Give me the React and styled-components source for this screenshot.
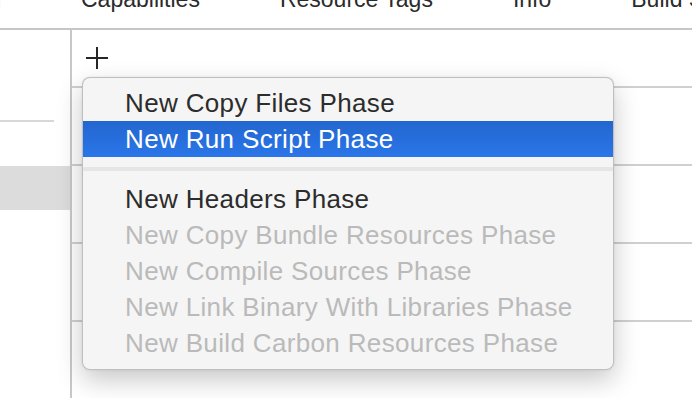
import React from "react";
import styled, { createGlobalStyle } from "styled-components";

const Global = createGlobalStyle`
  html, body { margin: 0; padding: 0; background: #ffffff; overflow: hidden; }
  * { box-sizing: border-box; }
`;

const Page = styled.div`
  width: 692px;
  height: 398px;
  display: flex;
  flex-direction: column;
  font-family: "Liberation Sans", Arial, sans-serif;
  background: #fff;
  overflow: hidden;
`;

const TabBar = styled.div`
  height: 30px;
  flex: none;
  display: flex;
  align-items: flex-start;
  gap: 80px;
  margin-left: -99px;
  border-bottom: 2px solid #c6c6c6;
  overflow: hidden;
`;

const Tab = styled.div`
  flex: none;
  width: ${(p) => (p.$w ? `${p.$w}px` : "auto")};
  text-align: ${(p) => (p.$w ? "right" : "left")};
  font-size: 23px;
  line-height: 23px;
  margin-top: -12px;
  color: #2b2b2b;
  white-space: nowrap;
`;

const Body = styled.div`
  flex: 1;
  display: flex;
`;

const Sidebar = styled.div`
  width: 72px;
  flex: none;
  border-right: 2px solid #c8c8c8;
  display: flex;
  flex-direction: column;
  padding-top: 90px;
`;

const SideDivider = styled.div`
  width: 54px;
  height: 2px;
  background: #d8d8d8;
  margin-bottom: 44px;
`;

const SideSelected = styled.div`
  height: 44px;
  background: #dcdcdc;
`;

const Main = styled.div`
  flex: 1;
  position: relative;
  display: flex;
  flex-direction: column;
`;

const Toolbar = styled.div`
  height: 58px;
  flex: none;
  padding: 17px 14px 0;
  border-bottom: 2px solid #d0d0d0;
`;

const Row = styled.div`
  height: 78px;
  flex: none;
  border-bottom: 2px solid #d0d0d0;
`;

const Menu = styled.div`
  position: absolute;
  left: 10px;
  top: 47px;
  width: 532px;
  height: 293px;
  background: #f5f5f5;
  border: 1px solid rgba(0, 0, 0, 0.22);
  border-radius: 8px;
  box-shadow: 0 10px 26px rgba(0, 0, 0, 0.22), 0 0 3px rgba(0, 0, 0, 0.08);
  padding: 7px 0 8px;
  display: flex;
  flex-direction: column;
`;

const Item = styled.div`
  height: 36px;
  line-height: 36px;
  padding-left: 42px;
  font-size: 26px;
  letter-spacing: 0.35px;
  white-space: nowrap;
  color: ${(p) => (p.$active ? "#ffffff" : p.$disabled ? "#bababa" : "#2c2c2c")};
  background: ${(p) =>
    p.$active ? "linear-gradient(to bottom, #2366cf, #2a76e9)" : "transparent"};
`;

const Separator = styled.div`
  height: 4px;
  margin: 10px 0;
  background: #e5e5e5;
`;

function PlusIcon() {
  return (
    <svg width="22" height="22" viewBox="0 0 22 22">
      <path d="M11 0V22M0 11H22" stroke="#262626" strokeWidth="2" fill="none" />
    </svg>
  );
}

const items = [
  { label: "New Copy Files Phase" },
  { label: "New Run Script Phase", active: true },
  { sep: true },
  { label: "New Headers Phase" },
  { label: "New Copy Bundle Resources Phase", disabled: true },
  { label: "New Compile Sources Phase", disabled: true },
  { label: "New Link Binary With Libraries Phase", disabled: true },
  { label: "New Build Carbon Resources Phase", disabled: true },
];

export default function App() {
  return (
    <Page>
      <Global />
      <TabBar>
        <Tab $w={100}>General</Tab>
        <Tab>Capabilities</Tab>
        <Tab>Resource Tags</Tab>
        <Tab>Info</Tab>
        <Tab>Build Settings</Tab>
      </TabBar>
      <Body>
        <Sidebar>
          <SideDivider />
          <SideSelected />
        </Sidebar>
        <Main>
          <Toolbar>
            <PlusIcon />
          </Toolbar>
          <Row />
          <Row />
          <Row />
          <Menu>
            {items.map((it, i) =>
              it.sep ? (
                <Separator key={i} />
              ) : (
                <Item key={i} $active={it.active} $disabled={it.disabled}>
                  {it.label}
                </Item>
              )
            )}
          </Menu>
        </Main>
      </Body>
    </Page>
  );
}
